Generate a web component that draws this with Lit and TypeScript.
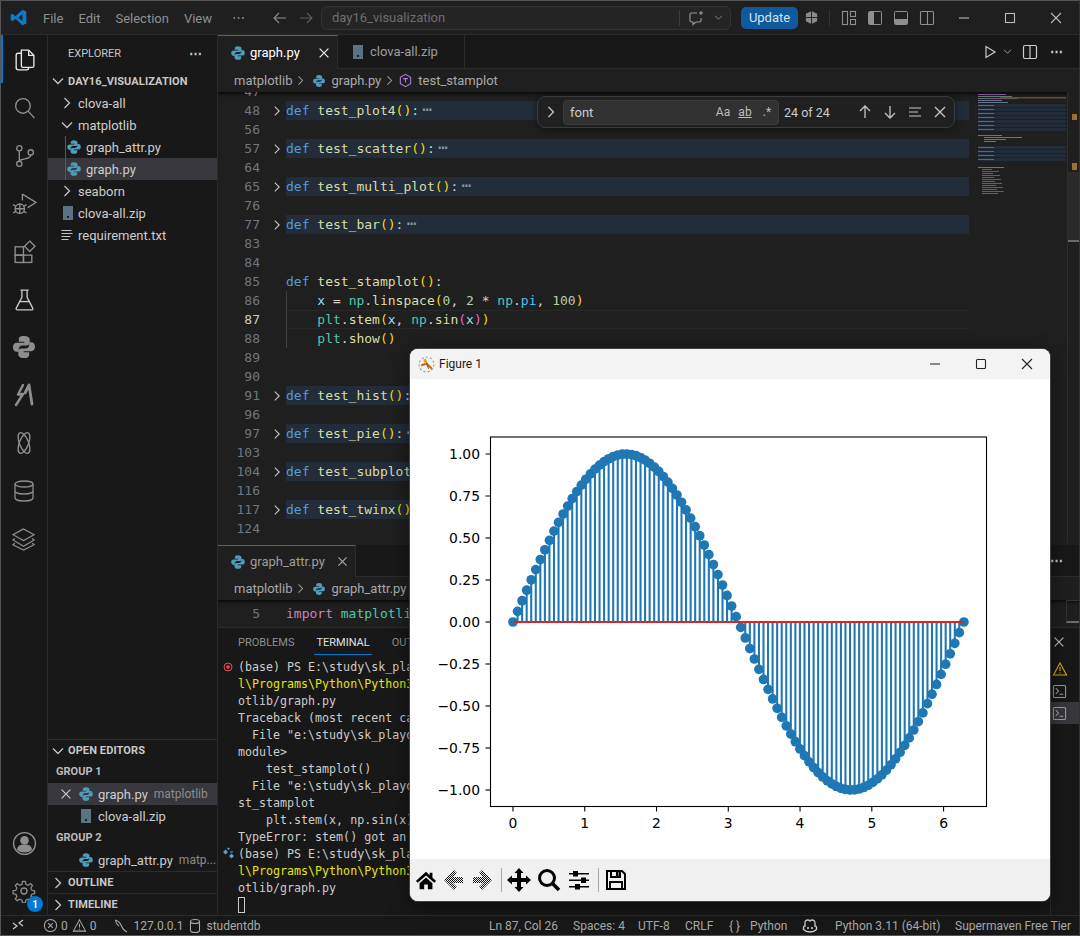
import { LitElement, html, css, svg } from 'lit';
import { customElement } from 'lit/decorators.js';

// ---- small icon helpers
const pyShape = svg`<path d="M8 1.2c-2.6 0-3.2 1-3.2 2.1v1.5h3.4v.6H3.5C2.2 5.4 1.2 6.4 1.2 8.1s1 2.8 2.2 2.8h1.4V9.3c0-1.2 1-2.2 2.2-2.2h2.7c1 0 1.8-.8 1.8-1.8V3.3c0-1.100-1.200-2.100-3.500-2.100z"/><path transform="rotate(180 8 8)" d="M8 1.2c-2.6 0-3.200 1-3.200 2.100v1.500h3.400v.6H3.500C2.200 5.400 1.200 6.400 1.200 8.100s1 2.800 2.200 2.800h1.400V9.300c0-1.200 1-2.200 2.200-2.200h2.700c1 0 1.800-.8 1.800-1.800V3.300c0-1.100-1.200-2.100-3.500-2.100z"/>`;

const py = (s = 16) => html`<svg class="ico" width=${s} height=${s} viewBox="0 0 16 16" fill="#519aba">${pyShape}</svg>`;
const zip = () => html`<svg class="ico" width="16" height="16" viewBox="0 0 16 16"><rect x="3" y="1" width="10" height="14" fill="#5b7380"/><rect x="7" y="11" width="2" height="2" fill="#1a2228"/></svg>`;
const chev = (dir: 'r' | 'd', s = 16, c = '#c5c5c5') => html`<svg class="ico" width=${s} height=${s} viewBox="0 0 16 16" fill="none" stroke=${c} stroke-width="1.3">${dir === 'r' ? svg`<path d="M5.500 3l5 5-5 5"/>` : svg`<path d="M3 5.500l5 5 5-5"/>`}</svg>`;
const stroke = (body: unknown, s = 16, c = 'currentColor', vb = 16, w = 1.1) => html`<svg class="ico" width=${s} height=${s} viewBox="0 0 ${vb} ${vb}" fill="none" stroke=${c} stroke-width=${w}>${body}</svg>`;
const closeX = (s = 16, c = '#ccc') => stroke(svg`<path d="M3 3l10 10M13 3L3 13"/>`, s, c, 16, 1.4);
const termIcon = stroke(svg`<rect x="1.500" y="1.500" width="13" height="13" rx="1.500"/><path d="M4 4.500l3 3-3 3M8 11h4"/>`, 15, '#a0a0a0');

const activityTop = [
  svg`<path d="M9 3h7l5 5v10a1.500 1.500 0 0 1-1.500 1.500h-9A1.500 1.500 0 0 1 9 18z" stroke="#e8e8e8"/><path d="M16 3v5h5" stroke="#e8e8e8"/><path d="M9 6H6a2 2 0 0 0-2 2v12a2 2 0 0 0 2 2h8a2 2 0 0 0 2-2v-.500" stroke="#e8e8e8"/>`,
  svg`<circle cx="10.500" cy="10.500" r="7"/><path d="M15.500 15.500l6 6.500"/>`,
  svg`<circle cx="7" cy="5" r="2.500"/><circle cx="7" cy="20" r="2.500"/><circle cx="18" cy="9" r="2.500"/><path d="M7 7.500v10M18 11.500c0 3-4 3.500-11 5"/>`,
  svg`<path d="M10 3l13 8-8 5"/><path d="M10 3v6"/><circle cx="7.500" cy="17" r="4.500"/><path d="M1 13l3 2M1 21l3-1.500M14 13l-3 2M14 21l-3-1.500M7.500 12.500V21.500M3 17H12"/>`,
  svg`<rect x="3" y="7.500" width="8" height="8"/><rect x="3" y="15.500" width="8" height="7"/><rect x="11" y="15.500" width="8" height="7"/><path d="M17 2l5 5-5 5-5-5z"/>`,
  svg`<path d="M8 3h8M9.500 3v7L4 20.500A1.200 1.200 0 0 0 5 22h14a1.200 1.200 0 0 0 1-1.500L14.500 10V3" stroke="#c8c8c8"/><path d="M7 14h10" stroke="#c8c8c8"/>`,
];
const activityMid = [
  html`<svg class="ico" width="26" height="26" viewBox="0 0 16 16" fill="#8e8e8e">${pyShape}</svg>`,
  stroke(svg`<path d="M11 2L6 11.500l5-.5L4 22" stroke-linecap="round" stroke-linejoin="round"/><path d="M17 2l-4 8M17 2l3 19" stroke-width="2.800" stroke-linecap="round"/>`, 24, '#8e8e8e', 24, 2.4),
  stroke(svg`<ellipse cx="12" cy="12" rx="4.500" ry="11" transform="rotate(22 12 12)"/><ellipse cx="12" cy="12" rx="4.500" ry="11" transform="rotate(-22 12 12)"/>`, 24, '#8e8e8e', 24, 1.400),
  stroke(svg`<ellipse cx="12" cy="5" rx="9" ry="3"/><path d="M3 5v14c0 1.700 4 3 9 3s9-1.300 9-3V5M3 12c0 1.700 4 3 9 3s9-1.300 9-3"/>`, 24, '#8e8e8e', 24, 1.300),
  stroke(svg`<path d="M12 2L1 8l11 6 11-6zM3 12l-2 1.500L12 20l11-6.500-2-1.500M3 17l-2 1.500L12 24l11-5.500-2-1.500"/>`, 24, '#8e8e8e', 25, 1.300),
];

// ---- code rows: tokens are [text, class]
type Tok = [string, string];
type Row = { n: number; fold?: boolean; toks?: Tok[]; guide?: boolean; cur?: boolean };
const defRow = (n: number, name: string): Row => ({
  n, fold: true,
  toks: [['def', 'kw'], [' ', ''], [name, 'fn'], ['()', 'br'], [':', 'pl'], ['⋯', 'el']],
});
const rows: Row[] = [
  { n: 47 }, defRow(48, 'test_plot4'), { n: 56 }, defRow(57, 'test_scatter'), { n: 64 },
  defRow(65, 'test_multi_plot'), { n: 76 }, defRow(77, 'test_bar'), { n: 83 }, { n: 84 },
  { n: 85, toks: [['def', 'kw'], [' ', ''], ['test_stamplot', 'fn'], ['()', 'br'], [':', 'pl']] },
  { n: 86, guide: true, toks: [['    ', ''], ['x', 'va'], [' = ', 'pl'], ['np', 'cl'], ['.', 'pl'], ['linspace', 'fn'], ['(', 'br'], ['0', 'nu'], [', ', 'pl'], ['2', 'nu'], [' * ', 'pl'], ['np', 'cl'], ['.', 'pl'], ['pi', 'co'], [', ', 'pl'], ['100', 'nu'], [')', 'br']] },
  { n: 87, guide: true, cur: true, toks: [['    ', ''], ['plt', 'cl'], ['.', 'pl'], ['stem', 'fn'], ['(', 'br'], ['x', 'va'], [', ', 'pl'], ['np', 'cl'], ['.', 'pl'], ['sin', 'fn'], ['(', 'vi'], ['x', 'va'], [')', 'vi'], [')', 'br']] },
  { n: 88, guide: true, toks: [['    ', ''], ['plt', 'cl'], ['.', 'pl'], ['show', 'fn'], ['()', 'br']] },
  { n: 89 }, { n: 90 }, defRow(91, 'test_hist'), { n: 96 }, defRow(97, 'test_pie'), { n: 103 },
  defRow(104, 'test_subplot'), { n: 116 }, defRow(117, 'test_twinx'), { n: 124 },
];

const terminal: [string, string][] = [
  ['(base) PS E:\\study\\sk_playdata\\day16_visualization>', ''],
  ['l\\Programs\\Python\\Python311\\python.exe', 'yl'],
  ['otlib/graph.py', ''],
  ['Traceback (most recent call last):', ''],
  ['  File "e:\\study\\sk_playdata\\graph.py", line 95, in <', ''],
  ['module>', ''],
  ['    test_stamplot()', ''],
  ['  File "e:\\study\\sk_playdata\\graph.py", line 87, in te', ''],
  ['st_stamplot', ''],
  ['    plt.stem(x, np.sin(x), use_line_collection=True)', ''],
  ['TypeError: stem() got an unexpected keyword argument', ''],
  ['(base) PS E:\\study\\sk_playdata\\day16_visualization>', ''],
  ['l\\Programs\\Python\\Python311\\python.exe', 'yl'],
  ['otlib/graph.py', ''],
];

// ---- plot: same transform as a default 640x480 matplotlib figure
const px = (v: number) => 103 + v * 71.76;
const py2 = (v: number) => 243 - v * 168;
const pts = Array.from({ length: 100 }, (_, i) => {
  const x = (i / 99) * 2 * Math.PI;
  return [px(x), py2(Math.sin(x))];
});
const yTicks = [1, 0.75, 0.5, 0.25, 0, -0.25, -0.5, -0.75, -1];
const xTicks = [0, 1, 2, 3, 4, 5, 6];

// minimap rows
const miniBands = [105, 109, 113, 117, 121, 125, 129, 147, 151, 155, 159];
const miniTop = [[94, '#7a5290', 28], [96, '#5f7f5c', 34], [98, '#6b5d88', 40], [100, '#6d6f8c', 24], [102, '#61798c', 30]] as const;
const miniCode = [[135, 0, 24], [137, 6, 38], [139, 6, 22], [141, 6, 12], [167, 0, 26]] as const;
const miniGreen = Array.from({ length: 13 }, (_, i) => [169 + i * 2, 10 + ((i * 7) % 13)]);

// the disabled back / forward buttons of the Tk toolbar are dithered
const ditherArrow = (id: string, flip: boolean) => html`<svg width="20" height="20" viewBox="0 0 20 20">
  <defs><pattern id=${id} width="2" height="2" patternUnits="userSpaceOnUse"><rect width="2" height="2" fill="#f0f0f0"/><rect width="1" height="1" fill="#111"/><rect x="1" y="1" width="1" height="1" fill="#111"/></pattern></defs>
  <path transform=${flip ? 'matrix(-1 0 0 1 20 0)' : ''} d="M0 10L10 0l3 3-4 4h10v6H9l4 4-3 3z" fill="url(#${id})"/>
</svg>`;

@customElement('app-root')
export class AppRoot extends LitElement {
  static styles = css`
    :host { display: block; width: 1080px; height: 936px; font-family: Roboto, "Open Sans", sans-serif; color: #ccc; font-size: 13px; }
    * { box-sizing: border-box; }
    .ico { display: block; flex: none; }
    .app { position: relative; width: 1080px; height: 936px; border: 1px solid #555; border-right-color: #333; display: grid; grid-template-rows: 34px 1fr 20px; overflow: hidden; background: #1f1f1f; }

    .titlebar { display: flex; align-items: center; background: #1f1f1f; border-bottom: 1px solid #2b2b2b; color: #8f8f8f; }
    .logo { width: 32px; margin-left: 1px; display: flex; justify-content: center; }
    .menu { display: flex; margin-left: 9px; gap: 15px; font-size: 13px; padding-top: 1px; }
    .tb-dots { margin-left: 20px; width: 20px; }
    .nav { display: flex; margin-left: 20px; gap: 10px; }
    .cmd { margin-left: 7px; width: 410px; height: 24px; border: 1px solid #333; border-radius: 6px; background: #242424; display: flex; align-items: center; padding: 0 2px 0 10px; color: #6e6e6e; font-size: 13px; }
    .cmd .sp { flex: 1; }
    .cmd .div { width: 1px; height: 16px; background: #3c3c3c; margin-right: 8px; }
    .update { margin-left: 10px; width: 57px; height: 22px; background: #0e5a9c; color: #d5e3f0; border-radius: 5px; display: flex; align-items: center; justify-content: center; font-size: 13px; }
    .tb-g { display: flex; align-items: center; }
    .layout { display: flex; margin-left: 10px; gap: 10px; padding-left: 12px; position: relative; }
    .layout::before { content: ""; width: 1px; height: 16px; background: #333; position: absolute; left: 0; top: 0; }
    .win { display: flex; margin-left: 6px; }
    .win > div { width: 46px; display: flex; justify-content: center; }

    .main { display: grid; grid-template-columns: 47px 170px 1fr; min-height: 0; }
    .activity { background: #181818; border-right: 1px solid #2b2b2b; display: flex; flex-direction: column; align-items: center; color: #8e8e8e; position: relative; }
    .act { height: 48px; width: 100%; display: flex; align-items: center; justify-content: center; flex: none; }
    .act.on { border-left: 2px solid #0078d4; padding-right: 2px; color: #e8e8e8; }
    .activity .sp { flex: 1; }
    .badge { position: absolute; right: 4px; bottom: 3px; width: 16px; height: 16px; border-radius: 50%; background: #0078d4; color: #fff; font-size: 10px; font-weight: 700; display: flex; align-items: center; justify-content: center; }
    .act.rel { position: relative; }

    .side { background: #181818; border-right: 1px solid #2b2b2b; display: flex; flex-direction: column; min-height: 0; overflow: hidden; }
    .side-h { height: 35px; display: flex; align-items: center; justify-content: space-between; padding: 1px 15px 0 20px; font-size: 11px; color: #c4c4c4; flex: none; }
    .sec { height: 22px; display: flex; align-items: center; font-size: 11px; font-weight: 700; color: #c8c8c8; padding-left: 2px; gap: 2px; flex: none; letter-spacing: .1px; }
    .sec.line { border-top: 1px solid #2b2b2b; }
    .tree { height: 22px; display: flex; align-items: center; white-space: nowrap; color: #cccccc; flex: none; position: relative; }
    .tree.sel { background: #37373d; }
    .tree .dim { color: #8c8c8c; font-size: 12px; margin-left: 6px; }
    .tree .lb { margin-left: 4px; }
    .guide::before { content: ""; position: absolute; left: 17px; top: 0; bottom: 0; width: 1px; background: #585858; }
    .grow { flex: 1; }
    .grp { height: 22px; display: flex; align-items: center; padding: 0 0 2px 8px; font-size: 11px; font-weight: 700; color: #bbb; flex: none; }

    .work { display: flex; flex-direction: column; min-width: 0; min-height: 0; }
    .tabs { height: 34px; background: #181818; display: flex; align-items: stretch; flex: none; border-bottom: 1px solid #2b2b2b; }
    .tab { display: flex; align-items: center; border-right: 1px solid #2b2b2b; color: #9d9d9d; padding-left: 12px; gap: 4px; }
    .tab.on { background: #1f1f1f; color: #fff; border-top: 1px solid #0078d4; margin-bottom: -1px; }
    .tabs .sp { flex: 1; }
    .tab-acts { display: flex; align-items: center; padding-right: 15px; }
    .crumb { height: 23px; display: flex; align-items: center; padding-left: 16px; color: #a9a9a9; gap: 2px; flex: none; background: #1f1f1f; }
    .crumb .m { margin-left: 3px; }
    .ed { flex: none; height: 451px; display: flex; position: relative; overflow: hidden; box-shadow: inset 0 4px 4px -3px #000; }
    .code { width: 751px; flex: none; font: 13px/19px "DejaVu Sans Mono", monospace; margin-top: -10px; }
    .row { height: 19px; display: flex; white-space: pre; }
    .ln { width: 42px; text-align: right; color: #6e7681; flex: none; }
    .cur .ln { color: #ccc; }
    .fold { width: 26px; flex: none; display: flex; align-items: center; justify-content: flex-end; padding-right: 2px; }
    .txt { flex: 1; position: relative; }
    .txt.band { background: #222d39; }
    .cur .txt { box-shadow: inset 0 1px 0 #282828, inset 0 -1px 0 #282828; }
    .txt.gd::before { content: ""; position: absolute; left: 0; top: 0; bottom: 0; width: 1px; background: #404040; }
    .kw { color: #569cd6; } .fn { color: #dcdcaa; } .br { color: #ffd700; } .pl { color: #d4d4d4; }
    .el { color: #8b949e; margin-left: 3px; font-size: 17px; line-height: 0; } .va { color: #9cdcfe; } .cl { color: #4ec9b0; } .nu { color: #b5cea8; }
    .co { color: #4fc1ff; } .vi { color: #da70d6; }
    .mini { flex: none; display: block; }

    .find { position: absolute; left: 319px; top: 4px; width: 418px; height: 32px; background: #202020; border: 1px solid #3a3a3a; border-radius: 8px; display: flex; align-items: center; color: #c5c5c5; box-shadow: 0 0 8px #00000080; }
    .find-in { width: 216px; height: 25px; margin-left: 4px; background: #313131; border: 1px solid #3c3c3c; border-radius: 4px; display: flex; align-items: center; padding: 0 3px 0 6px; gap: 6px; color: #ccc; }
    .find-in .sp { flex: 1; }
    .find-opt { font-size: 12px; color: #bdbdbd; width: 16px; text-align: center; }
    .under { text-decoration: underline; }
    .count { margin-left: 5px; width: 68px; font-size: 12.500px; color: #ccc; }
    .find-acts { display: flex; margin-left: 5px; gap: 9px; }

    .sash { height: 2px; flex: none; background: #1f1f1f; }
    .g2 { height: 82px; flex: none; display: flex; flex-direction: column; overflow: hidden; }
    .g2 .tabs { height: 32px; }
    .g2-code { font: 13px/19px "DejaVu Sans Mono", monospace; display: flex; white-space: pre; height: 27px; padding-top: 4px; box-shadow: inset 0 4px 4px -3px #000; }
    .g2-sb { margin-left: auto; margin-top: -4px; width: 13px; height: 23px; border-left: 1px solid #333; border-top: 1px solid #333; border-bottom: 2px solid #6a6a6a; }
    .panel { flex: 1; display: flex; flex-direction: column; background: #181818; border-top: 1px solid #2b2b2b; min-height: 0; position: relative; }
    .p-tabs { height: 31px; display: flex; font-size: 11px; padding: 2px 0 0 18px; gap: 18px; align-items: flex-start; flex: none; }
    .p-tab { display: flex; align-items: center; color: #8f8f8f; padding: 0 2px; border-bottom: 1px solid transparent; height: 25px; }
    .p-tab.on { color: #e0e0e0; border-bottom-color: #0078d4; }
    .term { font: 11.650px/17px "DejaVu Sans Mono", monospace; color: #ccc; padding-left: 20px; position: relative; height: 256px; overflow: hidden; }
    .tl { height: 17px; position: relative; white-space: pre; }
    .yl { color: #e5e510; }
    .deco { position: absolute; left: -16px; top: 1px; }
    .cursor { display: block; width: 7px; height: 16px; border: 1px solid #ccc; }
    .p-side { position: absolute; right: 0; top: 0; bottom: 0; width: 29px; display: flex; flex-direction: column; padding-top: 3px; border-left: 1px solid #2b2b2b; }
    .p-item { height: 22px; width: 100%; display: flex; align-items: center; padding-left: 1px; flex: none; }
    .p-item.on { background: #37373d; }

    .status { background: #181818; border-top: 1px solid #2b2b2b; display: flex; align-items: center; font-size: 12px; color: #a9a9a9; white-space: nowrap; overflow: hidden; }
    .st-l { display: flex; align-items: center; }
    .st-r { display: flex; align-items: center; margin-left: auto; flex: none; }
    .st-r > * { flex: none; }
    .remote { width: 33px; display: flex; justify-content: center; }
    .it { display: flex; align-items: center; gap: 3px; }

    .figure { position: absolute; left: 409px; top: 348px; width: 640px; height: 552px; background: #fff; border-radius: 8px; overflow: hidden; box-shadow: 0 0 0 1px #444, 0 6px 20px #00000080; display: flex; flex-direction: column; color: #000; }
    .f-title { height: 30px; background: #f3f3f3; display: flex; align-items: center; padding-left: 8px; font-size: 12px; flex: none; color: #1a1a1a; }
    .f-title .sp { flex: 1; }
    .f-ctl { width: 46px; display: flex; justify-content: center; }
    .f-plot { display: block; flex: none; }
    .f-bar { height: 42px; background: #f0f0f0; display: flex; align-items: center; flex: none; padding-left: 2px; }
    .f-bar .b { width: 28px; display: flex; justify-content: center; }
    .f-sep { width: 1px; height: 24px; background: #a8a8a8; margin: 0 3px; flex: none; }
  `;

  private renderTitle() {
    return html`<div class="titlebar">
      <div class="logo"><svg width="17" height="17" viewBox="0 0 24 24"><path fill="#0e7ac8" d="M17.500 1L23 3.600v16.800L17.500 23 7.700 13.900l-4.300 3.300L1 16V8l2.400-1.200 4.300 3.300zM17.500 7l-5.600 5 5.600 5z"/></svg></div>
      <div class="menu"><span>File</span><span>Edit</span><span>Selection</span><span>View</span></div>
      <div class="tb-dots">⋯</div>
      <div class="nav">
        ${stroke(svg`<path d="M14 8H2M7 3L2 8l5 5"/>`, 16, '#8f8f8f')}
        ${stroke(svg`<path d="M2 8h12M9 3l5 5-5 5"/>`, 16, '#5f5f5f')}
      </div>
      <div class="cmd"><span>day16_visualization</span><span class="sp"></span><span class="div"></span>
        ${stroke(svg`<path d="M9 3H3.500A1.500 1.500 0 0 0 2 4.500v6A1.500 1.500 0 0 0 3.500 12H5v2.500L8 12h3.500a1.500 1.500 0 0 0 1.500-1.500V8"/><path d="M13 1v4M11 3h4"/>`, 16, '#9a9a9a')}
        <span style="width:9px"></span>${chev('d', 11, '#8f8f8f')}<span style="width:4px"></span>
      </div>
      <div class="update">Update</div>
      <div class="tb-g" style="margin-left:6px">
        <svg width="15" height="15" viewBox="0 0 16 16"><path fill="#8a8a8a" d="M8 1l6 3v8l-6 3-6-3V4z"/><path stroke="#1f1f1f" d="M8 1v14M2 8h12"/></svg>
      </div>
      <div class="layout">
        ${stroke(svg`<rect x="1.500" y="1.500" width="5" height="13"/><rect x="9.500" y="1.500" width="5" height="5"/><rect x="9.500" y="9.500" width="5" height="5"/>`, 16, '#8f8f8f')}
        <svg class="ico" width="16" height="16" viewBox="0 0 16 16" fill="none" stroke="#8f8f8f"><rect x="1.500" y="1.500" width="13" height="13" rx="1"/><rect x="2" y="2" width="5" height="12" fill="#8f8f8f" stroke="none"/></svg>
        <svg class="ico" width="16" height="16" viewBox="0 0 16 16" fill="none" stroke="#8f8f8f"><rect x="1.500" y="1.500" width="13" height="13" rx="1"/><rect x="2" y="9" width="12" height="5" fill="#8f8f8f" stroke="none"/></svg>
        ${stroke(svg`<rect x="1.500" y="1.500" width="13" height="13" rx="1"/><path d="M8.500 2v12"/>`, 16, '#8f8f8f')}
      </div>
      <div class="win">
        <div>${stroke(svg`<path d="M3 8h10"/>`, 16, '#bbb')}</div>
        <div>${stroke(svg`<rect x="3.500" y="3.500" width="9" height="9"/>`, 16, '#bbb')}</div>
        <div>${stroke(svg`<path d="M3 3l10 10M13 3L3 13"/>`, 16, '#bbb')}</div>
      </div>
    </div>`;
  }

  private renderActivity() {
    return html`<div class="activity">
      ${activityTop.map((a, i) => html`<div class="act ${i === 0 ? 'on' : ''}">${stroke(a, 25, '#8e8e8e', 24, 1.300)}</div>`)}
      ${activityMid.map((a) => html`<div class="act">${a}</div>`)}
      <div class="sp"></div>
      <div class="act">${stroke(svg`<circle cx="12" cy="12" r="10.500"/><circle cx="12" cy="9" r="3.500" fill="#8e8e8e"/><path d="M5.500 18c0-4 3-4.500 6.500-4.500s6.500.5 6.500 4.500c-2 1.500-4 2-6.500 2s-4.500-.5-6.500-2z" fill="#8e8e8e"/>`, 25, '#8e8e8e', 24, 1.300)}</div>
      <div class="act rel">${stroke(svg`<circle cx="12" cy="12" r="3"/><path d="M10.500 2h3l.6 3 2.300 1 2.600-1.700 2 2-1.700 2.600 1 2.400 3 .6v3l-3 .6-1 2.300 1.700 2.600-2 2-2.600-1.700-2.300 1-.6 3h-3l-.6-3-2.400-1-2.500 1.700-2-2 1.600-2.600-1-2.300-3-.6v-3l3-.6 1-2.400L3 6.300l2-2 2.500 1.700L10 5z" transform="translate(.5 .5) scale(.95)"/>`, 24, '#8e8e8e', 24, 1.300)}<span class="badge">1</span></div>
    </div>`;
  }

  private renderSide() {
    const lines = stroke(svg`<path d="M2.500 3.500h10M2.500 6.500h11M2.500 9.500h9M2.500 12.500h7"/>`, 16, '#c5c5c5', 16, 1.200);
    return html`<div class="side">
      <div class="side-h"><span>EXPLORER</span><span style="font-size:13px;font-weight:700">⋯</span></div>
      <div class="sec">${chev('d')}<span>DAY16_VISUALIZATION</span></div>
      <div class="tree" style="padding-left:11px">${chev('r')}<span class="lb" style="margin-left:3px">clova-all</span></div>
      <div class="tree" style="padding-left:11px">${chev('d')}<span class="lb" style="margin-left:3px">matplotlib</span></div>
      <div class="tree guide" style="padding-left:18px">${py()}<span class="lb">graph_attr.py</span></div>
      <div class="tree sel guide" style="padding-left:18px">${py()}<span class="lb">graph.py</span></div>
      <div class="tree" style="padding-left:11px">${chev('r')}<span class="lb" style="margin-left:3px">seaborn</span></div>
      <div class="tree" style="padding-left:12px">${zip()}<span class="lb" style="margin-left:2px">clova-all.zip</span></div>
      <div class="tree" style="padding-left:11px">${lines}<span class="lb" style="margin-left:3px">requirement.txt</span></div>
      <div class="grow"></div>
      <div class="sec line">${chev('d')}<span>OPEN EDITORS</span></div>
      <div class="grp">GROUP 1</div>
      <div class="tree sel" style="padding-left:11px">${closeX(14, '#ccc')}<span style="width:5px"></span>${py()}<span class="lb">graph.py</span><span class="dim">matplotlib</span></div>
      <div class="tree" style="padding-left:30px">${zip()}<span class="lb">clova-all.zip</span></div>
      <div class="grp">GROUP 2</div>
      <div class="tree" style="padding-left:30px">${py()}<span class="lb">graph_attr.py</span><span class="dim">matp...</span></div>
      <div class="sec line">${chev('r')}<span>OUTLINE</span></div>
      <div class="sec line">${chev('r')}<span>TIMELINE</span></div>
    </div>`;
  }

  private renderRow(r: Row) {
    const band = !!r.fold;
    return html`<div class="row ${r.cur ? 'cur' : ''}">
      <div class="ln">${r.n}</div>
      <div class="fold">${r.fold ? chev('r', 14, '#c5c5c5') : ''}</div>
      <div class="txt ${band ? 'band' : ''} ${r.guide ? 'gd' : ''}">${(r.toks ?? []).map(([t, c]) => html`<span class=${c}>${t}</span>`)}</div>
    </div>`;
  }

  private renderFind() {
    return html`<div class="find">
      <span style="margin-left:5px">${chev('r', 16)}</span>
      <div class="find-in"><span>font</span><span class="sp"></span>
        <span class="find-opt">Aa</span><span class="find-opt under">ab</span><span class="find-opt">.*</span>
      </div>
      <div class="count">24 of 24</div>
      <div class="find-acts">
        ${stroke(svg`<path d="M8 14V2M3 7l5-5 5 5"/>`, 16, '#c5c5c5', 16, 1.300)}
        ${stroke(svg`<path d="M8 2v12M3 9l5 5 5-5"/>`, 16, '#c5c5c5', 16, 1.300)}
        ${stroke(svg`<path d="M2 4h12M2 8h9M2 12h12"/>`, 16, '#c5c5c5', 16, 1.100)}
        ${closeX(16, '#c5c5c5')}
      </div>
    </div>`;
  }

  private renderMini() {
    return html`<svg class="mini" width="110" height="451" viewBox="969 92 110 451">
      ${miniTop.map(([y, c, w]) => svg`<rect x="978" y=${y} width=${w} height="1" fill=${c}/>`)}
      <rect x="1000" y="97" width="66" height="1.500" fill="#6b4a2a"/>
      ${miniBands.map((y) => svg`<rect x="978" y=${y - 1} width="88" height="3" fill="#212c38"/><rect x="978" y=${y} width="16" height="1" fill="#4f6b80"/>`)}
      ${miniCode.map(([y, i, w]) => svg`<rect x=${978 + i} y=${y} width=${w} height="1" fill="#5f7789"/>`)}
      ${miniGreen.map(([y, w]) => svg`<rect x="982" y=${y} width=${w} height="1" fill="#4f6e47"/>`)}
      <rect x="1067" y="92" width="13" height="451" fill="#1f1f1f"/>
      <rect x="1067" y="172" width="13" height="68" fill="#2a2a2a"/>
      <rect x="1067" y="240" width="13" height="2" fill="#6a6a6a"/>
      <rect x="1067" y="92" width="1" height="451" fill="#2e2e2e"/>
      <rect x="1072" y="114" width="5" height="6" fill="#a0702a"/>
      <rect x="1072" y="163" width="5" height="7" fill="#a0702a"/>
    </svg>`;
  }

  private renderPanel() {
    return html`<div class="panel">
      <div class="p-tabs"><div class="p-tab">PROBLEMS</div><div class="p-tab on">TERMINAL</div><div class="p-tab">OUTPUT</div></div>
      <div class="term">
        ${terminal.map(([t, c], i) => html`<div class="tl ${c}">${i === 0 ? html`<svg class="deco" width="14" height="14" viewBox="0 0 14 14" fill="none" stroke="#f14c4c"><circle cx="6" cy="7" r="4"/><circle cx="6" cy="7" r="1.300" fill="#f14c4c"/></svg>` : ''}${i === 11 ? html`<svg class="deco" width="14" height="14" viewBox="0 0 14 14" fill="#5a9fd4"><path d="M1 5l2.500-2.500L6 5 3.500 7.500zM7 9l2.500-2.500L12 9l-2.500 2.500z"/><path d="M5 1.500l1.500-1 1.500 1-1.500 1.500zM8 4.500h3v1H8z"/></svg>` : ''}${t}</div>`)}
        <div class="tl"><span class="cursor"></span></div>
      </div>
      <div class="p-side">
        <div class="p-item">${closeX(14, '#bcbcbc')}</div>
        <div class="p-item" style="margin-top:5px">${stroke(svg`<path d="M8 2l6.500 12h-13zM8 6v4M8 11.500v1"/>`, 16, '#c8a812', 16, 1.200)}</div>
        <div class="p-item">${termIcon}</div>
        <div class="p-item on">${termIcon}</div>
      </div>
    </div>`;
  }

  private renderStatus() {
    return html`<div class="status">
      <div class="st-l">
        <div class="remote">${stroke(svg`<path d="M3 5l4 3-4 3M13 2L9 5l4 3"/>`, 16, '#ccc', 16, 1.200)}</div>
        <div class="it" style="margin-left:9px">${stroke(svg`<circle cx="8" cy="8" r="6.500"/><path d="M5.500 5.500l5 5M10.500 5.500l-5 5"/>`, 15)}<span>0</span></div>
        <div class="it" style="margin-left:4px">${stroke(svg`<path d="M8 2l6.500 12h-13zM8 6v4M8 11.500v1"/>`, 15)}<span>0</span></div>
        <div class="it" style="margin-left:16px">${stroke(svg`<path d="M2 2c3 .5 5 2.500 6.500 6s3 5 5.500 6M3 2c-.5 2 .5 4 3 6"/>`, 16)}<span style="margin-left:2px">127.0.0.1</span></div>
        <div class="it" style="margin-left:4px">${stroke(svg`<ellipse cx="8" cy="3.500" rx="4.500" ry="2"/><path d="M3.500 3.500v9c0 1.100 2 2 4.500 2s4.500-.9 4.500-2v-9"/>`, 16)}<span>studentdb</span></div>
      </div>
      <div class="st-r">
        <span style="width:84px">Ln 87, Col 26</span>
        <span style="width:65px">Spaces: 4</span>
        <span style="width:47px">UTF-8</span>
        <span style="width:44px">CRLF</span>
        <span style="width:21px">{ }</span>
        <span style="width:52px">Python</span>
        <span style="width:33px">${stroke(svg`<path d="M3 8c-1 0-1.500.5-1.500 1.500v2c2 2 4 2.500 6.500 2.500s4.500-.5 6.500-2.500v-2C14.500 8.500 14 8 13 8V5c0-2-1-3-3-3-1 0-1.500.5-2 1-.5-.5-1-1-2-1-2 0-3 1-3 3z"/><path d="M6 9v2M10 9v2" stroke-width="1.600"/>`, 16, '#ccc', 16, 1.300)}</span>
        <span style="width:120px">Python 3.11 (64-bit)</span>
        <span style="width:124px">Supermaven Free Tier</span>
      </div>
    </div>`;
  }

  private renderFigure() {
    const fmt = (v: number) => (v < 0 ? '\u2212' : '') + Math.abs(v).toFixed(2);
    const tick = 'font-family:"DejaVu Sans";font-size:13.900px;fill:#000';
    return html`<div class="figure">
      <div class="f-title">
        <svg class="ico" width="17" height="17" viewBox="0 0 16 16" fill="none"><circle cx="8" cy="8" r="7" stroke="#999" stroke-dasharray="2 2"/><path d="M3 9l5-2 5 5" stroke="#e0601a" stroke-width="2"/><path d="M6 3l2 4" stroke="#e8a010" stroke-width="2.500"/><path d="M8 7l2 5" stroke="#3a7a3a"/></svg>
        <span style="margin-left:4px">Figure 1</span><span class="sp"></span>
        <div class="f-ctl">${stroke(svg`<path d="M3 8h10"/>`, 16, '#222')}</div>
        <div class="f-ctl">${stroke(svg`<rect x="3.500" y="3.500" width="9" height="9" rx="1"/>`, 16, '#222')}</div>
        <div class="f-ctl">${stroke(svg`<path d="M3 3l10 10M13 3L3 13"/>`, 16, '#222')}</div>
      </div>
      <svg class="f-plot" width="640" height="480" viewBox="0 0 640 480">
        ${pts.map(([x, y]) => svg`<line x1=${x} x2=${x} y1="243" y2=${y} stroke="#1f77b4" stroke-width="2.080"/>`)}
        ${pts.map(([x, y]) => svg`<circle cx=${x} cy=${y} r="4.860" fill="#1f77b4"/>`)}
        <line x1=${pts[0][0]} x2=${pts[99][0]} y1="243" y2="243" stroke="#d62728" stroke-width="2.080"/>
        <rect x="80.500" y="58" width="496" height="369.500" fill="none" stroke="#000" stroke-width="1.100"/>
        ${yTicks.map((v) => svg`<line x1="75.500" x2="80" y1=${py2(v)} y2=${py2(v)} stroke="#000" stroke-width="1.100"/><text x="70" y=${py2(v) + 5} text-anchor="end" style=${tick}>${fmt(v)}</text>`)}
        ${xTicks.map((v) => svg`<line x1=${px(v)} x2=${px(v)} y1="428" y2="432.500" stroke="#000" stroke-width="1.100"/><text x=${px(v)} y="448.500" text-anchor="middle" style=${tick}>${v}</text>`)}
      </svg>
      <div class="f-bar">
        <div class="b"><svg width="22" height="22" viewBox="0 0 24 24" fill="#000"><path d="M12 3L1 13l2 2 9-8 9 8 2-2-4-3.600V4h-3v2.700zM5 15.500V22h5v-5h4v5h5v-6.500l-7-6.200z"/></svg></div>
        <div class="b">${ditherArrow('dith-back', false)}</div>
        <div class="b">${ditherArrow('dith-fwd', true)}</div>
        <div class="f-sep" style="margin-left:5px;margin-right:3px"></div>
        <div class="b"><svg width="24" height="24" viewBox="0 0 24 24" fill="#000"><path d="M12 0l4.500 5H14v5h5V7.500l5 4.500-5 4.500V14h-5v5h2.500L12 24l-4.500-5H10v-5H5v2.500L0 12l5-4.500V10h5V5H7.500z"/></svg></div>
        <div class="b" style="margin-left:2px"><svg width="24" height="24" viewBox="0 0 24 24" fill="none" stroke="#000" stroke-width="3"><circle cx="10" cy="10" r="7.500"/><path d="M15.500 15.500L22 22" stroke-width="3.500"/></svg></div>
        <div class="b" style="margin-left:2px"><svg width="22" height="22" viewBox="0 0 22 22" fill="#000"><path d="M1 4h20v1.500H1zM1 10.500h20V12H1zM1 17h20v1.500H1z"/><rect x="5" y="2" width="5" height="5.500"/><rect x="13" y="8.500" width="5" height="5.500"/><rect x="7" y="15" width="5" height="5.500"/></svg></div>
        <div class="f-sep" style="margin-left:5px;margin-right:3px"></div>
        <div class="b"><svg width="22" height="22" viewBox="0 0 22 22" fill="none" stroke="#000" stroke-width="2"><path d="M2 2h15l3 3v15H2z"/><path d="M6 2v6h9V2" /><rect x="11" y="3" width="2.500" height="4" fill="#000" stroke="none"/><path d="M5 20v-7h12v7"/></svg></div>
      </div>
    </div>`;
  }

  render() {
    return html`<div class="app">
      ${this.renderTitle()}
      <div class="main">
        ${this.renderActivity()}
        ${this.renderSide()}
        <div class="work">
          <div class="tabs">
            <div class="tab on" style="width:120px">${py()}<span style="flex:1">graph.py</span><span style="margin-right:6px">${closeX(14, '#eee')}</span></div>
            <div class="tab" style="width:127px">${zip()}<span>clova-all.zip</span></div>
            <span class="sp"></span>
            <div class="tab-acts">
              ${stroke(svg`<path d="M4 2.500v11l9-5.500z"/>`, 16, '#ccc', 16, 1.200)}
              <span style="margin:0 9px 0 4px">${chev('d', 11, '#aaa')}</span>
              ${stroke(svg`<rect x="1.500" y="1.500" width="13" height="13" rx="1.500"/><path d="M8 2v12"/>`, 16, '#ccc', 16, 1.200)}
              <span style="width:10px"></span><span style="font-weight:700;width:16px;text-align:center">⋯</span>
            </div>
          </div>
          <div class="crumb">matplotlib${chev('r', 13, '#999')}<span class="m">${py(14)}</span><span class="m">graph.py</span>${chev('r', 13, '#999')}${stroke(svg`<path d="M8 1.500l5.500 3v7L8 14.500l-5.500-3v-7zM5.500 6h5M8 6v4"/>`, 15, '#b180d7')}<span class="m">test_stamplot</span></div>
          <div class="ed">
            <div class="code">${rows.map((r) => this.renderRow(r))}</div>
            ${this.renderMini()}
            ${this.renderFind()}
          </div>
          <div class="sash"></div>
          <div class="g2">
            <div class="tabs">
              <div class="tab on" style="width:138px">${py()}<span style="flex:1;color:#9d9d9d">graph_attr.py</span><span style="margin-right:6px">${closeX(13, '#aaa')}</span></div>
              <span class="sp"></span>
              <div class="tab-acts"><span style="font-weight:700;width:16px;text-align:center">⋯</span></div>
            </div>
            <div class="crumb">matplotlib${chev('r', 13, '#999')}<span class="m">${py(14)}</span><span class="m">graph_attr.py</span></div>
            <div class="g2-code"><div class="ln">5</div><div style="width:26px"></div><span><span style="color:#c586c0">import</span> <span class="cl">matplotlib</span></span><div class="g2-sb"></div></div>
          </div>
          ${this.renderPanel()}
        </div>
      </div>
      ${this.renderStatus()}
      ${this.renderFigure()}
    </div>`;
  }
}
